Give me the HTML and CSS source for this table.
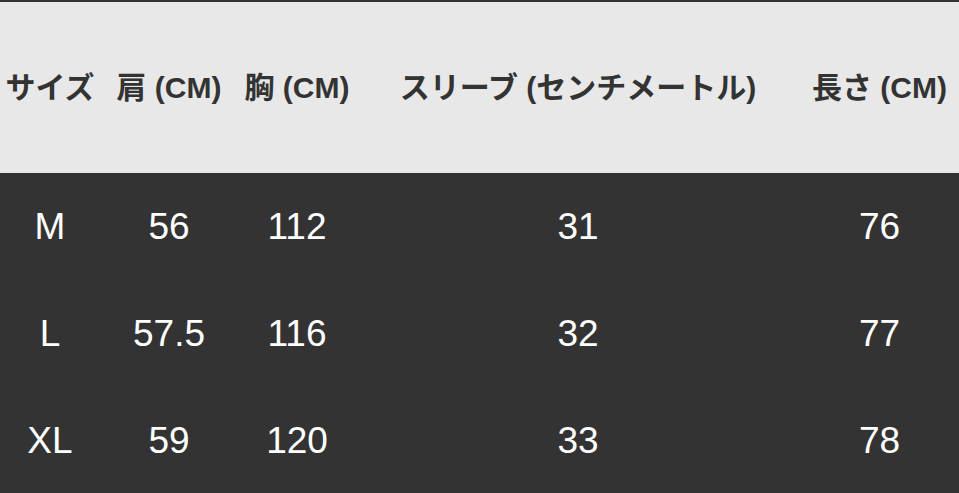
FILE: index.html
```html
<!DOCTYPE html>
<html lang="ja">
<head>
<meta charset="utf-8">
<link rel="stylesheet" href="styles.css">
</head>
<body>
<div class="size-table">
  <div class="row head">
    <div class="cell">サイズ</div>
    <div class="cell">肩 (CM)</div>
    <div class="cell">胸 (CM)</div>
    <div class="cell">スリーブ (センチメートル)</div>
    <div class="cell">長さ (CM)</div>
  </div>
  <div class="row body">
    <div class="cell">M</div>
    <div class="cell">56</div>
    <div class="cell">112</div>
    <div class="cell">31</div>
    <div class="cell">76</div>
  </div>
  <div class="row body">
    <div class="cell">L</div>
    <div class="cell">57.5</div>
    <div class="cell">116</div>
    <div class="cell">32</div>
    <div class="cell">77</div>
  </div>
  <div class="row body">
    <div class="cell">XL</div>
    <div class="cell">59</div>
    <div class="cell">120</div>
    <div class="cell">33</div>
    <div class="cell">78</div>
  </div>
</div>
</body>
</html>
```
FILE: styles.css
```css
html, body {
  margin: 0;
  padding: 0;
  background: #333333;
}
body {
  width: 959px;
  height: 493px;
  overflow: hidden;
  font-family: "Liberation Sans", "Noto Sans CJK JP", sans-serif;
}
.size-table {
  border-top: 2px solid #333333;
}
.row {
  display: grid;
  grid-template-columns: 100px 138px 118px 444px 159px;
  align-items: center;
}
.cell {
  text-align: center;
  white-space: nowrap;
}
.head {
  box-sizing: border-box;
  height: 171px;
  padding-bottom: 6px;
  background: #e8e8e8;
  color: #333333;
  font-weight: bold;
  font-size: 30px;
}
.body {
  height: 107px;
  background: #333333;
  color: #ffffff;
  font-size: 37px;
}
```
